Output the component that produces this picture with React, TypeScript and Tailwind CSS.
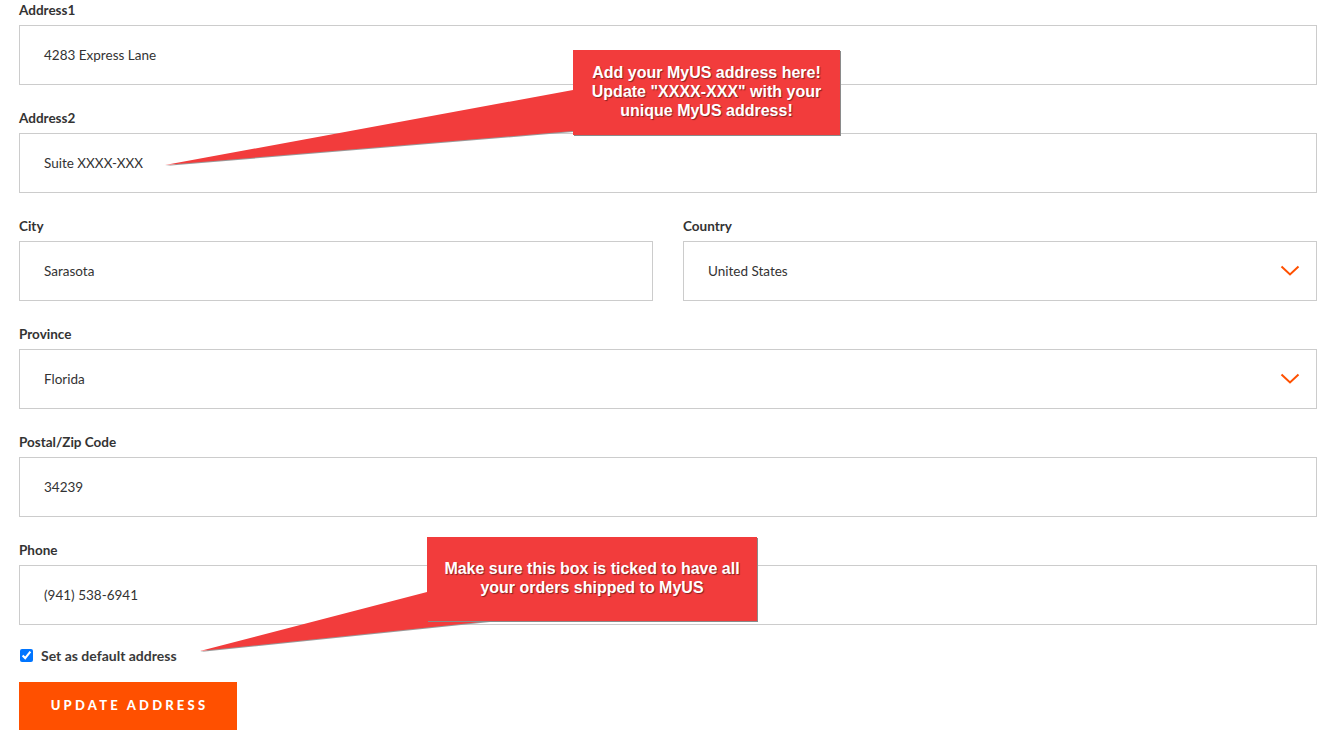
import React from "react";

const font = { fontFamily: "Lato, 'Open Sans', sans-serif" };

function Field({ label, value, select }: { label: string; value: string; select?: boolean }) {
  return (
    <div className="mb-[23px]">
      <div className="h-[20px] leading-[20px] mb-[5px] text-[13.5px] font-bold text-[#333]">{label}</div>
      <div className="h-[60px] border border-[#cccccc] bg-white flex items-center pl-[24px] pr-[16px] text-[13.5px] text-[#333]">
        <span className="flex-1">{value}</span>
        {select && (
          <svg width="20" height="12" viewBox="0 0 20 12">
            <path d="M1.5 1.5 L10 9.5 L18.5 1.5" fill="none" stroke="#ff5000" strokeWidth="2" />
          </svg>
        )}
      </div>
    </div>
  );
}

export default function App() {
  return (
    <main className="relative w-[1341px] h-[746px] bg-white overflow-hidden" style={font}>
      <div className="w-[1298px] ml-[19px]">
        <Field label="Address1" value="4283 Express Lane" />
        <Field label="Address2" value="Suite XXXX-XXX" />
        <div className="grid grid-cols-2 gap-[30px]">
          <Field label="City" value="Sarasota" />
          <Field label="Country" value="United States" select />
        </div>
        <Field label="Province" value="Florida" select />
        <Field label="Postal/Zip Code" value="34239" />
        <Field label="Phone" value="(941) 538-6941" />
        <label className="flex items-center gap-[8px] mt-[-3px] h-[20px] ml-[1px]">
          <input type="checkbox" defaultChecked className="w-[13px] h-[13px] accent-[#0075ff] m-0" />
          <span className="text-[14px] font-bold text-[#3a3a3a]">Set as default address</span>
        </label>
        <button className="mt-[17px] w-[218px] h-[48px] bg-[#ff5000] text-white text-[13px] font-black tracking-[3.2px] pl-[3px]">
          UPDATE ADDRESS
        </button>
      </div>

      <svg className="absolute left-0 top-0 pointer-events-none" width="1341" height="746">
        <polygon points="165,166 573,92 573,132" fill="#9a9a9a" />
        <polygon points="165,165 573,90 573,131" fill="#f23c3c" />
        <polygon points="200,652 427,593 427,622 490,622" fill="#9a9a9a" />
        <polygon points="200,651 427,592 427,621 490,621" fill="#f23c3c" />
      </svg>

      <div
        className="absolute left-[573px] top-[50px] w-[267px] h-[85px] bg-[#f23c3c] shadow-[1px_1px_0_#8a8a8a] flex items-start justify-center pt-[13px] text-center text-white text-[16px] font-bold leading-[19px]"
        style={{ fontFamily: "'Liberation Sans', Arial, sans-serif", textShadow: "1px 1px 1px rgba(0,0,0,0.45)" }}
      >
        Add your MyUS address here!
        <br />
        Update "XXXX-XXX" with your
        <br />
        unique MyUS address!
      </div>

      <div
        className="absolute left-[427px] top-[537px] w-[330px] h-[84px] bg-[#f23c3c] shadow-[1px_1px_0_#8a8a8a] flex items-start justify-center pt-[23px] text-center text-white text-[16px] font-bold leading-[18.5px]"
        style={{ fontFamily: "'Liberation Sans', Arial, sans-serif", textShadow: "1px 1px 1px rgba(0,0,0,0.45)" }}
      >
        Make sure this box is ticked to have all
        <br />
        your orders shipped to MyUS
      </div>
    </main>
  );
}
